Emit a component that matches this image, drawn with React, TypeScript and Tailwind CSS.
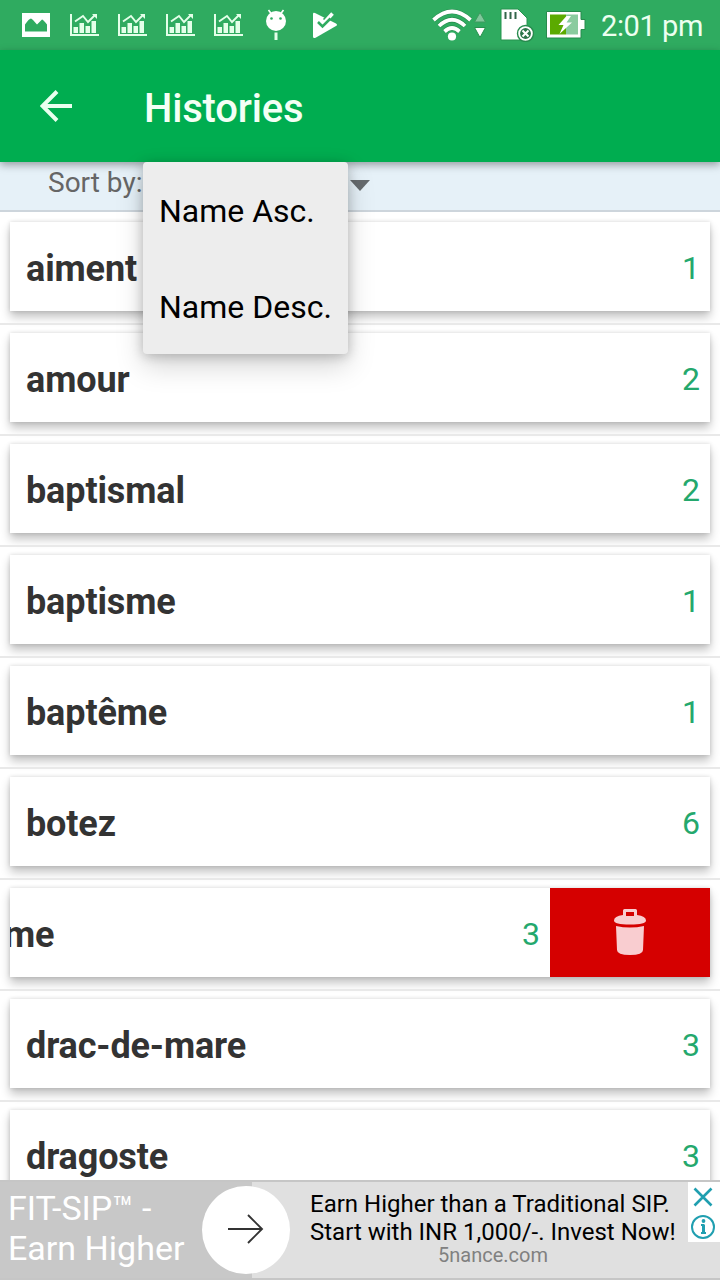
import { clsx } from "clsx";

type HistoryItem = {
  word: string;
  count: number;
  swiped?: boolean;
};

const items: HistoryItem[] = [
  { word: "aiment", count: 1 },
  { word: "amour", count: 2 },
  { word: "baptismal", count: 2 },
  { word: "baptisme", count: 1 },
  { word: "baptême", count: 1 },
  { word: "botez", count: 6 },
  { word: "despotisme", count: 3, swiped: true },
  { word: "drac-de-mare", count: 3 },
  { word: "dragoste", count: 3 },
];

const sortOptions = ["Name Asc.", "Name Desc."];

function ImageIcon() {
  return (
    <svg width="30" height="24" viewBox="0 0 30 24">
      <path fill="#fff" fillRule="evenodd" d="M1 0h28v24H1zM4 18.500h22v-7q-4-5-5-5l-5 5q-5-6-6-6-2 0-6 6z" />
    </svg>
  );
}

function ChartIcon() {
  return (
    <svg width="30" height="24" viewBox="0 0 30 24" fill="#e4ffe9">
      <path d="M0 1h2v20h27v2H0z" />
      <path d="M3.500 14h4.500v6H3.500zM9.500 10H14v10H9.500zM15.500 13H20v7h-4.500zM21.500 8H26v12h-4.500z" />
      <path d="M5 8.500l8-5.500 5 6 7-7" fill="none" stroke="#e4ffe9" strokeWidth="1.900" />
      <path d="M22 1h5v5z" />
    </svg>
  );
}

function AndroidIcon() {
  return (
    <svg width="22" height="32" viewBox="0 0 22 32">
      <path d="M3.500 1l3 4M18.500 1l-3 4" stroke="#fff" strokeWidth="1.600" />
      <circle cx="11" cy="12" r="10" fill="#fff" />
      <circle cx="6.500" cy="9.500" r="1.300" fill="#2fab60" />
      <circle cx="15.500" cy="9.500" r="1.300" fill="#2fab60" />
      <path d="M9.500 23.500h3V31h-3z" fill="#e4ffe9" />
    </svg>
  );
}

function PlayCheckIcon() {
  return (
    <svg width="26" height="28" viewBox="0 0 26 28">
      <path d="M1 3Q1 1 3 2L24 12.500Q26 13.800 24 15L4 26.500Q1 28 1 25.500z" fill="#fff" />
      <path d="M12 9L18.500 2.500" stroke="#2fab60" strokeWidth="3" />
      <path d="M11 13L20.500 2.500" stroke="#fff" strokeWidth="3.600" />
      <path d="M6 11l4.500 4.500L18.500 7.500" fill="none" stroke="#2fab60" strokeWidth="2.600" />
    </svg>
  );
}

function WifiIcon() {
  return (
    <svg width="40" height="34" viewBox="0 0 40 34">
      <g fill="none" stroke="#258a4c" strokeWidth="5">
        <path d="M1.500 12Q20-5 38.500 12M7 18Q20 5.500 33 18M12.500 23.500Q20 16.500 27.500 23.500" />
      </g>
      <g fill="none" stroke="#fff" strokeWidth="3.800">
        <path d="M1.500 12Q20-5 38.500 12M7 18Q20 5.500 33 18M12.500 23.500Q20 16.500 27.500 23.500" />
      </g>
      <circle cx="20" cy="28.500" r="4.100" fill="#fff" />
    </svg>
  );
}

function DataArrowsIcon() {
  return (
    <svg width="12" height="26" viewBox="0 0 12 26">
      <path d="M6 .500L11.500 10H.500z" fill="#80c79b" stroke="#3d9a5f" />
      <path d="M6 25.500L11.500 15.500H.500z" fill="#fff" stroke="#25904c" />
    </svg>
  );
}

function SdCardIcon() {
  return (
    <svg width="34" height="34" viewBox="0 0 34 34">
      <path d="M1 1h17l9 9v22H1z" fill="#fff" stroke="#26944f" />
      <path d="M5.500 4v7M10.500 4v7M15.500 4v7" stroke="#33664a" strokeWidth="2" />
      <circle cx="25.500" cy="25.500" r="8" fill="#fff" stroke="#278b4d" strokeWidth="1.400" />
      <circle cx="25.500" cy="25.500" r="5.400" fill="#2b7449" />
      <path d="M22.500 22.500l6 6M28.500 22.500l-6 6" stroke="#fff" strokeWidth="2" />
    </svg>
  );
}

function BatteryIcon() {
  return (
    <svg width="40" height="28" viewBox="0 0 40 28">
      <path d="M.500.500h34.500v8h4v10h-4v8.500H.500z" fill="#fff" stroke="#278b4d" />
      <path d="M4 3.500h16v20H4z" fill="#5baa00" />
      <path d="M20 3.500h12v20H20z" fill="#8acb9f" />
      <path d="M20.500 5l-8 9h5l-4 9 12.500-11.500h-5.500L25 5z" fill="#fff" />
    </svg>
  );
}

function TrashIcon() {
  return (
    <svg width="34" height="48" viewBox="0 0 34 48" fill="#f9cdd0">
      <path fillRule="evenodd" d="M10 1.500Q10 0 11.500 0h11Q24 0 24 1.500V6q9 1 9 5.500 0 4-16 4t-16-4Q1 7 10 6zM13 3v4h8V3z" />
      <path d="M3 17q14 3 28 0l-1 24q0 5-13 5t-13-5z" />
    </svg>
  );
}

function StatusBar() {
  return (
    <div className="flex h-[50px] items-center bg-[#2fab60] text-white">
      <div className="flex items-center pl-[21px]">
        <ImageIcon />
        <div className="ml-[19px] flex gap-[18px]">
          <ChartIcon />
          <ChartIcon />
          <ChartIcon />
          <ChartIcon />
        </div>
        <div className="ml-[21px]">
          <AndroidIcon />
        </div>
        <div className="ml-[25px]">
          <PlayCheckIcon />
        </div>
      </div>
      <div className="ml-auto flex items-center pr-[17px]">
        <WifiIcon />
        <div className="ml-[2px]">
          <DataArrowsIcon />
        </div>
        <div className="ml-[14px]">
          <SdCardIcon />
        </div>
        <div className="ml-[12px]">
          <BatteryIcon />
        </div>
        <span className="ml-[15px] w-[102px] pt-[2px] text-[29px] leading-[50px] tracking-[-0.4px] whitespace-nowrap text-[#edfff0]">
          2:01 pm
        </span>
      </div>
    </div>
  );
}

function SortMenu() {
  return (
    <div className="absolute top-[162px] left-[143px] z-20 h-[192px] w-[205px] rounded-[4px] bg-[#ededed] shadow-[0_12px_28px_rgba(0,0,0,0.17),0_2px_12px_rgba(0,0,0,0.22)]">
      {sortOptions.map((option) => (
        <div key={option} className="flex h-[96px] items-center pt-[2px] pl-[16px] text-[32px] whitespace-nowrap text-black">
          {option}
        </div>
      ))}
    </div>
  );
}

function HistoryRow({ item, first }: { item: HistoryItem; first: boolean }) {
  return (
    <li className={clsx("h-[111px] shrink-0 border-t-2 px-[10px] pt-[8px]", first ? "border-transparent" : "border-[#e9e9e9]")}>
      <div className="flex h-[89px] justify-end overflow-hidden bg-white shadow-[0_6px_9px_rgba(0,0,0,0.24),0_0_4px_rgba(0,0,0,0.14)]">
        <div className="flex w-[700px] shrink-0 items-center justify-between pr-[10px] pl-[16px]">
          <span className="pt-[5px] text-[36px] leading-[42px] font-bold tracking-[-0.13px] text-[#333]">{item.word}</span>
          <span className="pt-[2px] text-[32px] text-[#24a86d]">{item.count}</span>
        </div>
        {item.swiped && (
          <div className="flex w-[160px] shrink-0 items-center justify-center bg-[#d50000]">
            <TrashIcon />
          </div>
        )}
      </div>
    </li>
  );
}

function AdBanner() {
  return (
    <div className="z-10 flex h-[100px] shrink-0 border-y-2 border-[#c6c6c6] bg-[#e0e0e0]">
      <div className="relative w-[252px] shrink-0 bg-[#c8c8c8] pt-[6px] pl-[8px] text-[34px] leading-[40px] whitespace-nowrap text-white">
        FIT-SIP™ -<br />
        Earn Higher
        <div className="absolute top-[4px] left-[202px] flex size-[88px] items-center justify-center rounded-full bg-white">
          <svg width="36" height="32" viewBox="0 0 36 32" fill="none" stroke="#333" strokeWidth="1.900">
            <path d="M0 15h34M20 1l14 14-14 14" />
          </svg>
        </div>
      </div>
      <div className="ml-[58px] w-[366px] pt-[8px] text-[24px] leading-[28px] whitespace-nowrap text-black">
        Earn Higher than a Traditional SIP.
        <br />
        Start with INR 1,000/-. Invest Now!
        <div className="text-center text-[20px] leading-[18px] text-[#808080]">5nance.com</div>
      </div>
      <div className="ml-auto flex h-[60px] w-[32px] flex-col items-center bg-white">
        <svg width="30" height="60" viewBox="0 0 30 60" fill="none" stroke="#209fb0" strokeWidth="2.600">
          <path d="M5.500 6.500l17 17M22.500 6.500l-17 17" />
          <circle cx="14" cy="45" r="11" strokeWidth="2" />
          <path d="M12 43h3M12 51h5" strokeWidth="2" />
          <path d="M14.500 42.500V51.500" strokeWidth="3" />
          <circle cx="14.500" cy="39" r="1.900" fill="#209fb0" stroke="none" />
        </svg>
      </div>
    </div>
  );
}

export default function App() {
  return (
    <div className="relative flex h-[1280px] w-[720px] flex-col overflow-hidden bg-white font-['Roboto',sans-serif]">
      <StatusBar />
      <header className="z-10 flex h-[112px] shrink-0 items-center bg-[#00ad50] pl-[40px] shadow-[0_3px_8px_rgba(0,0,0,0.35)]">
        <svg width="32" height="32" viewBox="0 0 32 32" fill="none" stroke="#e9ffef" strokeWidth="4">
          <path d="M32 16H3M17 1.500L2.500 16 17 30.500" />
        </svg>
        <h1 className="ml-[72px] pt-[5px] text-[40px] leading-[48px] font-medium tracking-[-0.2px] text-[#f3fff5]">Histories</h1>
      </header>

      <div className="flex h-[50px] shrink-0 border-b-2 border-[#cdd5dc] bg-[#e6f1f8] pl-[48px] text-[28px] leading-[41px] text-[#666]">
        <span className="w-[302px]">Sort by:</span>
        <svg className="mt-[18px]" width="20" height="11" viewBox="0 0 20 11">
          <path d="M0 0h20L10 11z" fill="#666b6e" />
        </svg>
      </div>

      <ul className="flex min-h-0 flex-1 flex-col overflow-hidden">
        {items.map((item, index) => (
          <HistoryRow key={item.word} item={item} first={index === 0} />
        ))}
      </ul>

      <AdBanner />
      <SortMenu />
    </div>
  );
}
